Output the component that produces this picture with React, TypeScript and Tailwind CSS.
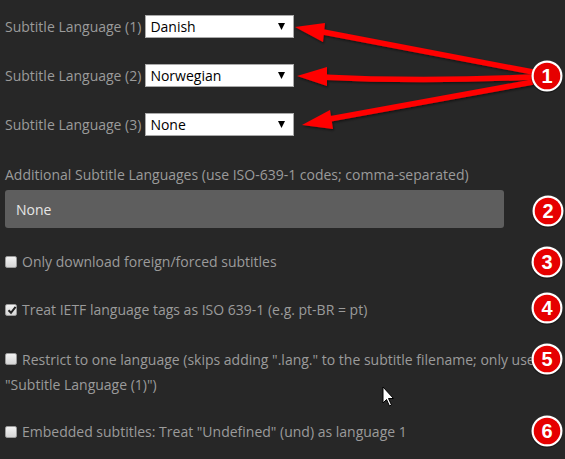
import React from "react";

const font = { fontFamily: '"Open Sans", "Liberation Sans", sans-serif' };

function Select({ value }: { value: string }) {
  return (
    <div className="w-[149px] h-[23px] bg-white border border-[#a9a9a9] flex items-center justify-between pl-[4px] pr-[8px] text-[14px] text-black">
      <span>{value}</span>
      <svg width="7" height="7" viewBox="0 0 7 7"><polygon points="0,0 7,0 3.5,7" fill="#000" /></svg>
    </div>
  );
}

function Check({ checked }: { checked?: boolean }) {
  return (
    <span className="relative inline-block w-[12px] h-[12px] shrink-0 rounded-[2px] border border-[#9a9a9a] bg-gradient-to-b from-[#f2f2f2] to-[#d6d6d6] mt-[4px]">
      {checked && (
        <svg className="absolute left-[1px] top-[0px]" width="10" height="10" viewBox="0 0 10 10">
          <path d="M1.5 5.2 L4 7.8 L8.6 1.8" stroke="#222" strokeWidth="2" fill="none" />
        </svg>
      )}
    </span>
  );
}

function Row({ label, value }: { label: string; value: string }) {
  return (
    <div className="flex items-center gap-[4px] h-[23px]">
      <span className="text-[14px] text-[#9b9b9b]">{label}</span>
      <Select value={value} />
    </div>
  );
}

function Badge({ n, x, y }: { n: number; x: number; y: number }) {
  return (
    <g>
      <circle cx={x} cy={y + 1} r="16" fill="#000" opacity="0.35" />
      <circle cx={x} cy={y} r="15.5" fill="#fff" />
      <circle cx={x} cy={y} r="13.3" fill="#e60000" />
      <text x={x} y={y + 7} textAnchor="middle" fontSize="20" fontWeight="bold" fill="#fff" fontFamily='"Liberation Sans", Arial, sans-serif'>{n}</text>
    </g>
  );
}

export default function App() {
  return (
    <div className="relative w-[565px] h-[459px] bg-[#272727] overflow-hidden" style={font}>
      <div className="pl-[5px] pt-[15px] flex flex-col">
        <Row label="Subtitle Language (1)" value="Danish" />
        <div className="h-[26px]" />
        <Row label="Subtitle Language (2)" value="Norwegian" />
        <div className="h-[26px]" />
        <Row label="Subtitle Language (3)" value="None" />
        <div className="h-[29px] shrink-0" />
        <div className="text-[14px] text-[#9b9b9b] leading-[20px] h-[20px]">
          Additional Subtitle Languages (use ISO-639-1 codes; comma-separated)
        </div>
        <div className="h-[5px]" />
        <div className="w-[499px] h-[38px] rounded-[3px] bg-[#5e5e5e] flex items-center pl-[11px] text-[14px] text-[#e6e6e6]">
          None
        </div>
        <div className="h-[24px]" />
        <div className="flex gap-[5px] text-[14px] text-[#9b9b9b] leading-[20px] h-[20px]">
          <Check />
          <span>Only download foreign/forced subtitles</span>
        </div>
        <div className="h-[28px]" />
        <div className="flex gap-[5px] text-[14px] text-[#9b9b9b] leading-[20px] h-[20px]">
          <Check checked />
          <span>Treat IETF language tags as ISO 639-1 (e.g. pt-BR = pt)</span>
        </div>
        <div className="h-[27px]" />
        <div className="text-[14px] text-[#9b9b9b] leading-[25px] w-[535px]">
          <span className="inline-flex align-top mr-[5px] mt-[2px]"><Check /></span>
          Restrict to one language (skips adding ".lang." to the subtitle filename; only use "Subtitle Language (1)")
        </div>
        <div className="h-[25px]" />
        <div className="flex gap-[5px] text-[14px] text-[#9b9b9b] leading-[20px] h-[20px]">
          <Check />
          <span>Embedded subtitles: Treat "Undefined" (und) as language 1</span>
        </div>
      </div>

      <svg className="absolute left-0 top-0 pointer-events-none" width="565" height="459" viewBox="0 0 565 459">
        <defs>
          <filter id="sh" x="-10%" y="-10%" width="120%" height="130%">
            <feDropShadow dx="1" dy="1.5" stdDeviation="1" floodColor="#000" floodOpacity="0.5" />
          </filter>
        </defs>
        <g filter="url(#sh)" fill="#ff0000" stroke="none">
          <path d="M533 72 L318 31" stroke="#ff0000" strokeWidth="5.5" fill="none" />
          <polygon points="295,27 325,23 323,42" />
          <path d="M533 77 Q420 82 320 77" stroke="#ff0000" strokeWidth="5.5" fill="none" />
          <polygon points="297,76 327,67 327,86" />
          <path d="M533 82 L324 120" stroke="#ff0000" strokeWidth="5.5" fill="none" />
          <polygon points="302,125 330,110 333,129" />
        </g>
        <Badge n={1} x={547} y={76} />
        <Badge n={2} x={548} y={211} />
        <Badge n={3} x={547} y={262} />
        <Badge n={4} x={547} y={308} />
        <Badge n={5} x={547} y={359} />
        <Badge n={6} x={547} y={431} />
        <path d="M383 387 L383 403 L386.5 399.5 L389.5 406 L391.5 405 L388.5 398.5 L393.5 398.5 Z" fill="#fff" stroke="#000" strokeWidth="1" />
      </svg>
    </div>
  );
}
